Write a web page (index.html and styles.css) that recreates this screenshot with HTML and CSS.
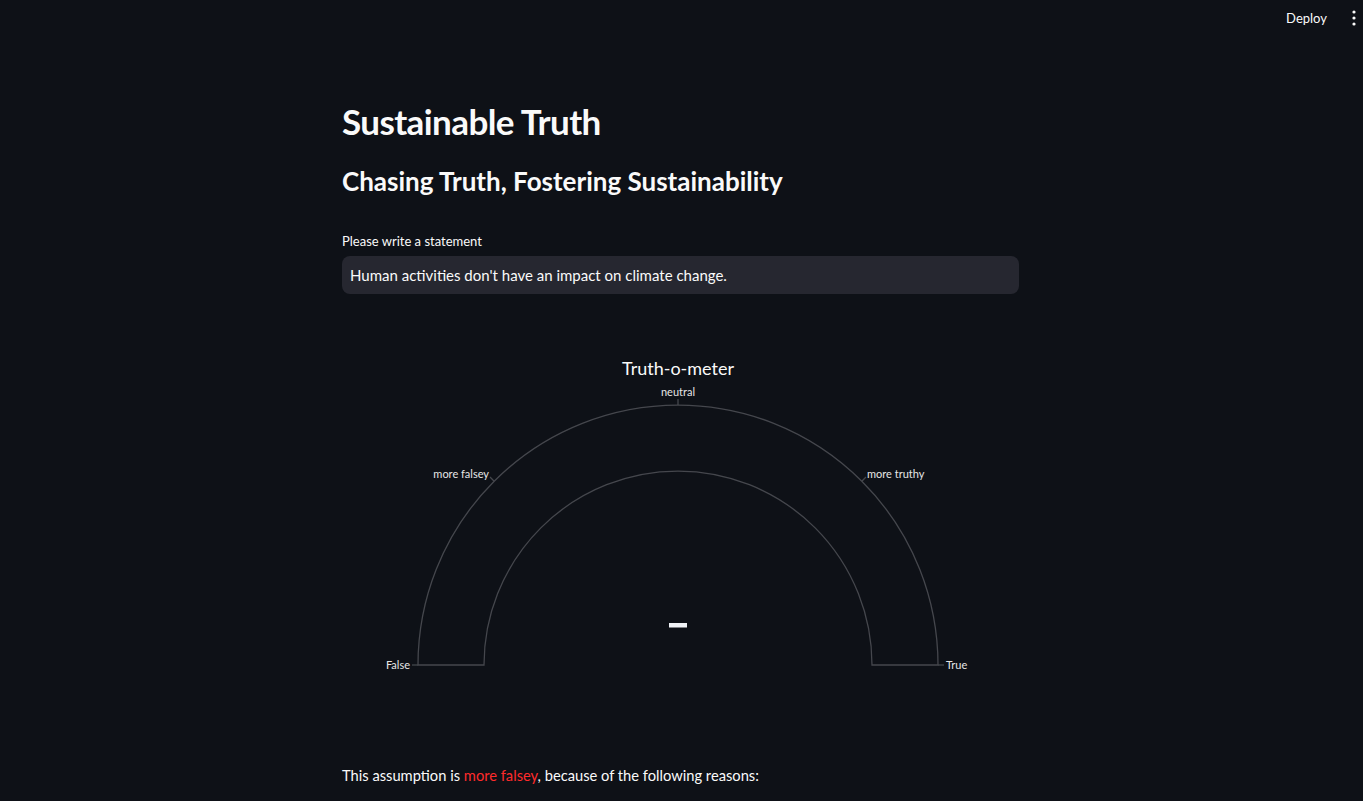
FILE: index.html
```html
<!DOCTYPE html>
<html lang="en">
<head>
<meta charset="utf-8">
<title>Sustainable Truth</title>
<link rel="stylesheet" href="styles.css">
</head>
<body>
<header class="topbar">
  <span class="deploy">Deploy</span>
  <span class="menu" aria-label="menu">
    <svg width="6" height="18" viewBox="0 0 6 18"><circle cx="3" cy="3" r="1.6" fill="#fafafa"/><circle cx="3" cy="9" r="1.6" fill="#fafafa"/><circle cx="3" cy="15" r="1.6" fill="#fafafa"/></svg>
  </span>
</header>
<main class="block">
  <h1 class="title">Sustainable Truth</h1>
  <h2 class="subtitle">Chasing Truth, Fostering Sustainability</h2>
  <label class="field-label" for="stmt">Please write a statement</label>
  <div class="input" id="stmt">Human activities don't have an impact on climate change.</div>
  <svg class="gauge" width="677" height="390" viewBox="0 0 677 390">
    <text class="g-title" x="336" y="45" text-anchor="middle">Truth-o-meter</text>
    <path class="arc" d="M76 335 A260 260 0 0 1 596 335 L530 335 A194 194 0 0 0 142 335 Z"/>
    <g class="ticks">
      <line x1="76" y1="335" x2="70" y2="335"/>
      <line x1="152.2" y1="151.2" x2="148" y2="147"/>
      <line x1="336" y1="75" x2="336" y2="69"/>
      <line x1="519.8" y1="151.2" x2="524" y2="147"/>
      <line x1="596" y1="335" x2="602" y2="335"/>
    </g>
    <g class="labels">
      <text x="68" y="339" text-anchor="end">False</text>
      <text x="147" y="148" text-anchor="end">more falsey</text>
      <text x="336" y="66" text-anchor="middle">neutral</text>
      <text x="525" y="148" text-anchor="start">more truthy</text>
      <text x="604" y="339" text-anchor="start">True</text>
    </g>
    <rect class="value" x="327" y="293" width="18" height="4.5"/>
  </svg>
  <p class="result">This assumption is <span class="falsey">more falsey</span>, because of the following reasons:</p>
</main>
</body>
</html>
```

FILE: styles.css
```css
html, body {
  margin: 0;
  padding: 0;
  background: #0e1117;
  color: #fafafa;
  font-family: "Lato", "Liberation Sans", sans-serif;
}

.topbar {
  display: flex;
  justify-content: flex-end;
  align-items: center;
  gap: 24px;
  height: 35px;
  padding-right: 6px;
}

.deploy {
  font-size: 13px;
  color: #fafafa;
}

.menu {
  display: flex;
  align-items: center;
}

.block {
  width: 677px;
  margin: 0 auto;
  padding-right: 2px;
  display: flex;
  flex-direction: column;
}

.title {
  margin: 65px 0 0;
  font-size: 35px;
  letter-spacing: -0.6px;
  line-height: 1.2;
  font-weight: 700;
}

.subtitle {
  margin: 24px 0 0;
  font-size: 26px;
  line-height: 1.2;
  font-weight: 700;
}

.field-label {
  margin-top: 37px;
  font-size: 13px;
  line-height: 1.2;
}

.input {
  margin-top: 6px;
  height: 38px;
  box-sizing: border-box;
  padding: 0 8px;
  display: flex;
  align-items: center;
  background: #262730;
  border-radius: 8px;
  font-size: 15px;
}

.gauge {
  margin-top: 36px;
  display: block;
}

.g-title {
  fill: #fafafa;
  font-size: 18px;
  font-family: "Lato", "Liberation Sans", sans-serif;
}

.arc {
  fill: none;
  stroke: #45474d;
  stroke-width: 1.3;
}

.ticks line {
  stroke: #45474d;
  stroke-width: 1.3;
}

.labels text {
  fill: #e6e6e6;
  font-size: 11px;
  font-family: "Lato", "Liberation Sans", sans-serif;
}

.value {
  fill: #f0f2f6;
}

.result {
  margin: 47px 0 0;
  font-size: 14.7px;
  line-height: 1.2;
}

.falsey {
  color: #ff2b2b;
}
```
